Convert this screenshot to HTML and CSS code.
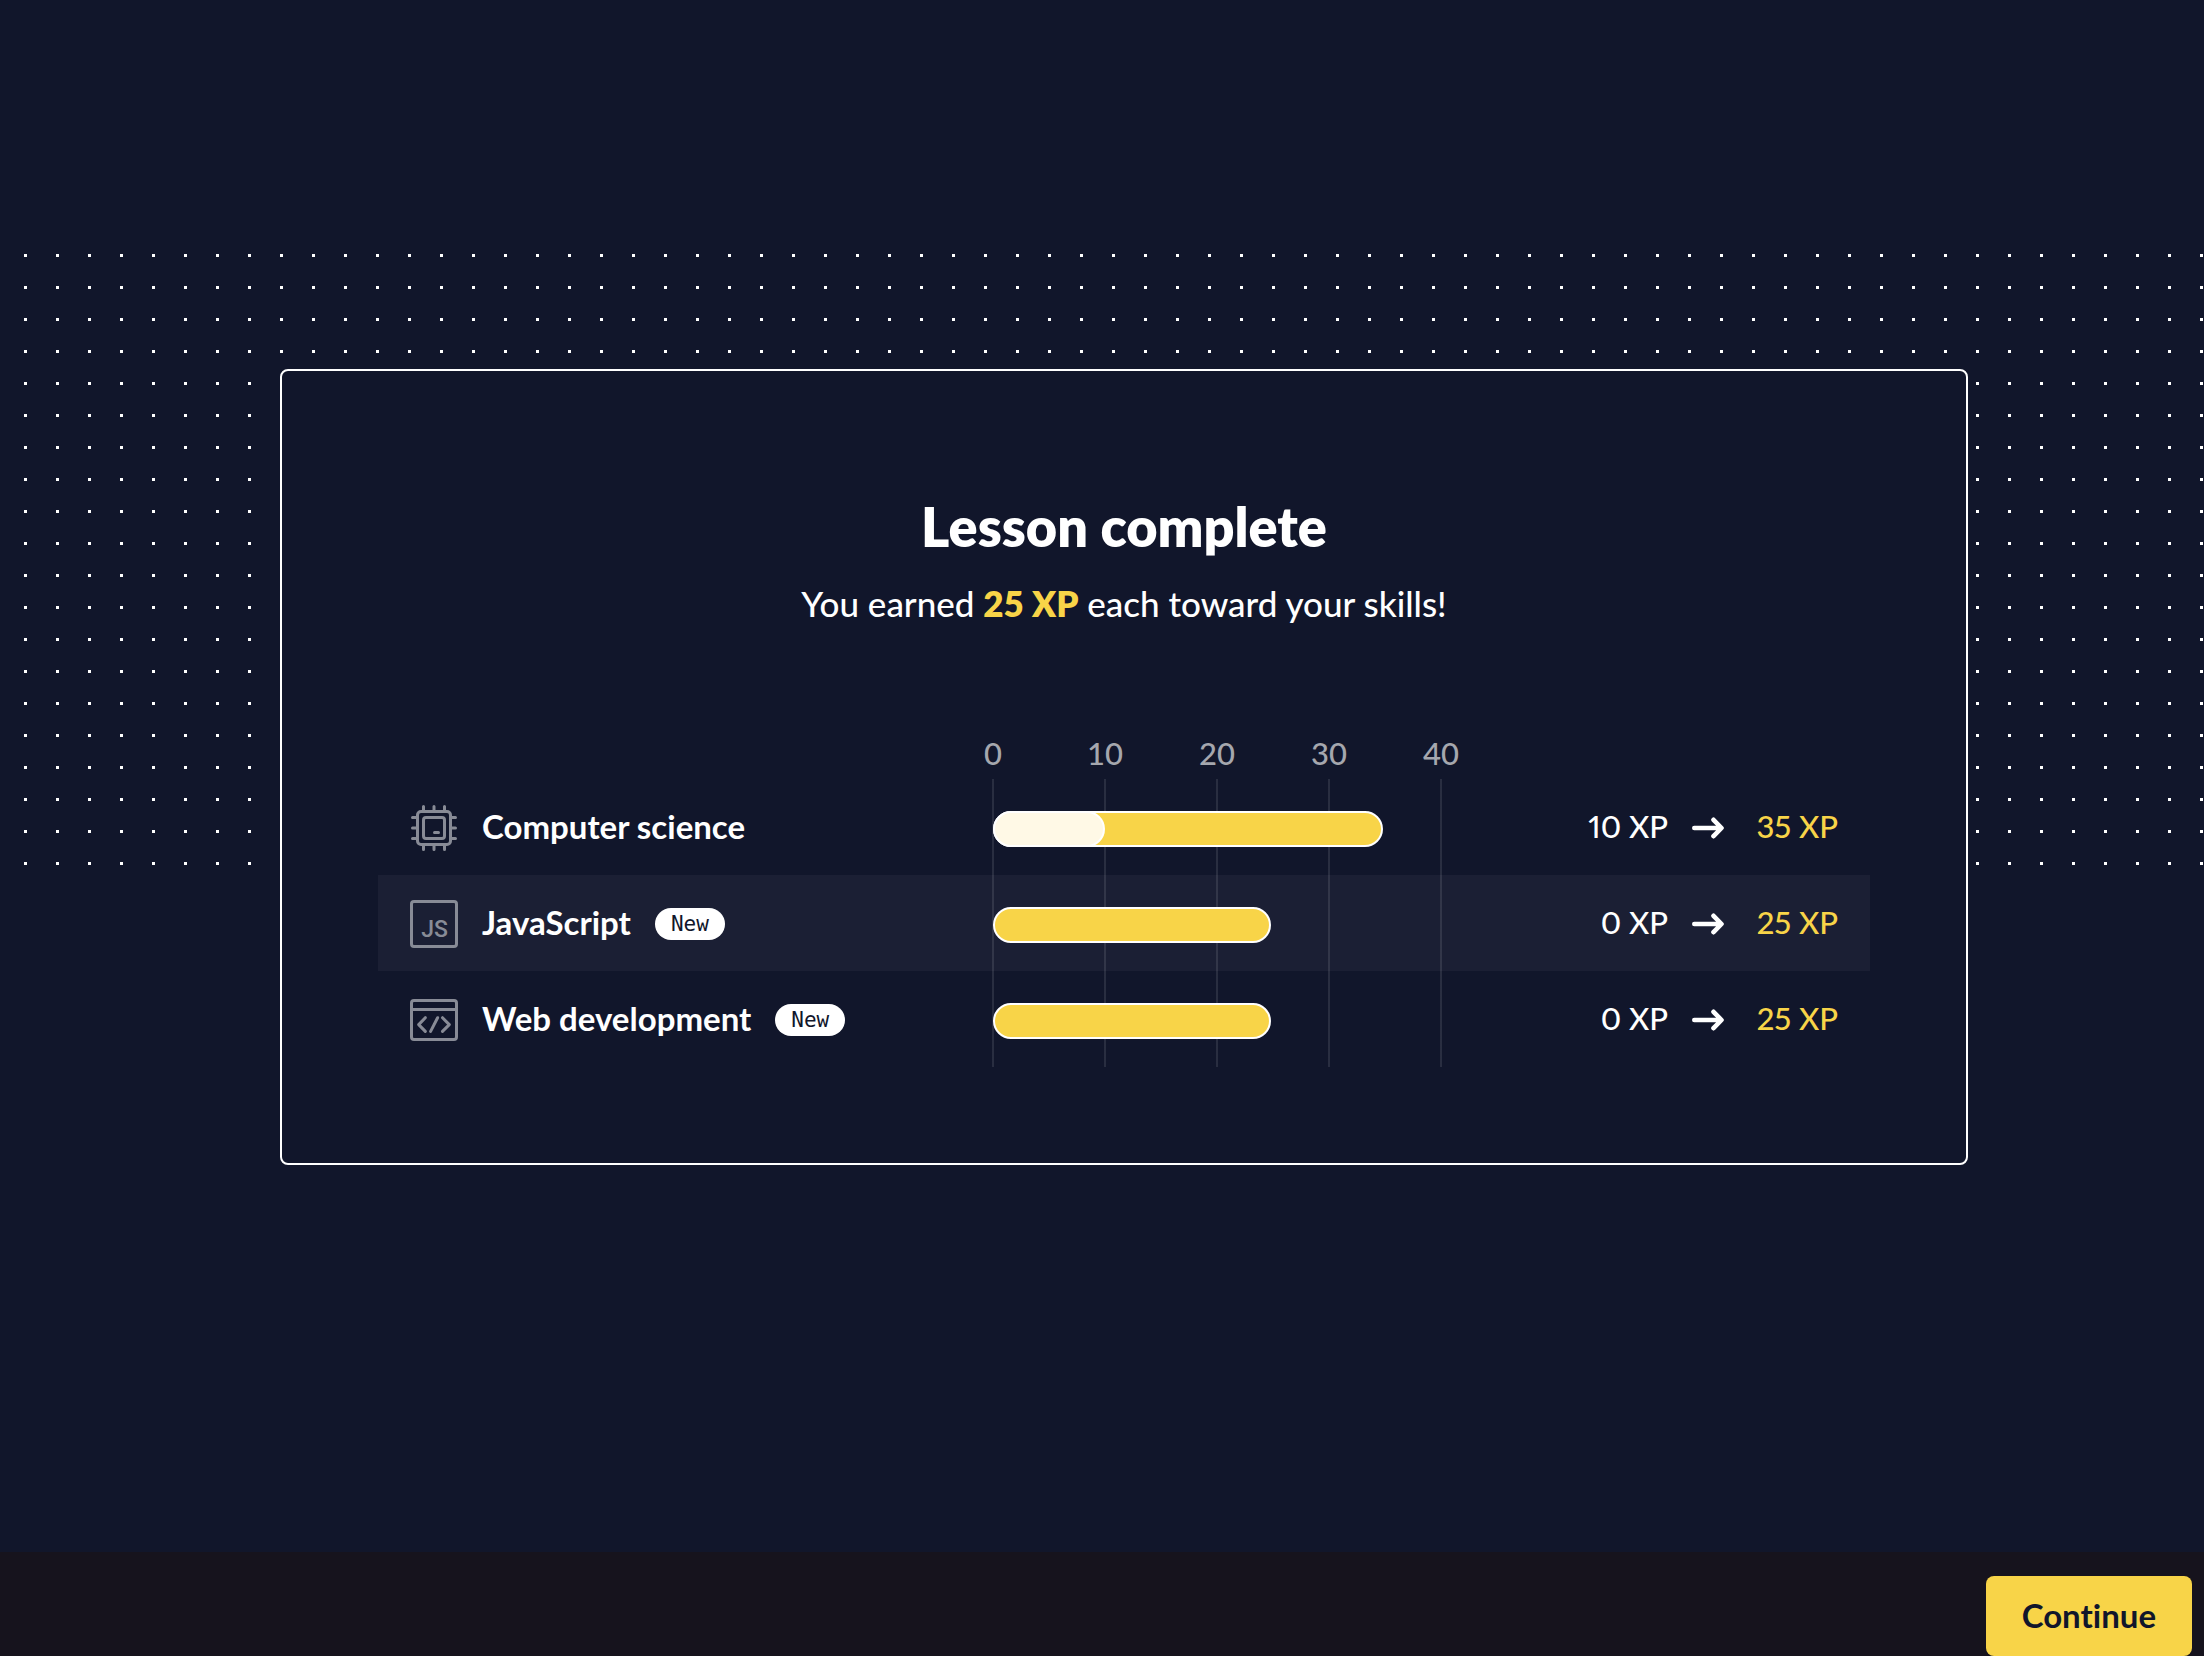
FILE: index.html
```html
<!DOCTYPE html>
<html lang="en">
<head>
<meta charset="utf-8">
<meta name="viewport" content="width=device-width, initial-scale=1">
<title>Lesson complete</title>
<link rel="stylesheet" href="styles.css">
</head>
<body>
<main class="stage">
  <section class="card" aria-labelledby="title">
    <h1 class="title" id="title">Lesson complete</h1>
    <p class="summary">You earned <strong class="earned">25 XP</strong> each toward your skills!</p>
    <table class="skills">
      <colgroup><col class="col-skill"><col class="col-chart"><col class="col-xp"></colgroup>
      <thead>
        <tr>
          <td></td>
          <th scope="col"><div class="axis"><span>0</span><span>10</span><span>20</span><span>30</span><span>40</span></div></th>
          <td></td>
        </tr>
      </thead>
      <tbody>
        <tr>
          <th scope="row"><div class="skill">
            <svg class="icon" viewBox="0 0 48 48" aria-hidden="true"><rect x="7.5" y="7.5" width="33" height="33" rx="3.5"/><rect x="13.5" y="13.5" width="21" height="21" rx="2.5"/><path d="M24.5 28.5h4M13.5 2.5v5M24 2.5v5M34.5 2.5v5M13.5 40.5v5M24 40.5v5M34.5 40.5v5M2.5 13.5h5M2.5 24h5M2.5 34.5h5M40.5 13.5h5M40.5 24h5M40.5 34.5h5"/></svg>
            <span class="name">Computer science</span>
          </div></th>
          <td class="chart"><div class="track"><div class="bar" style="--xp: 35"></div><div class="bar-before" style="--xp: 10"></div></div></td>
          <td><div class="xp"><span>10 XP</span><svg class="arrow" viewBox="0 0 32 32" aria-hidden="true"><path d="M2.3 16H28M21.5 7.8 29.5 16l-8 8.2"/></svg><span class="after">35 XP</span></div></td>
        </tr>
        <tr class="striped">
          <th scope="row"><div class="skill">
            <svg class="icon" viewBox="0 0 48 48" aria-hidden="true"><rect x="1.5" y="1.5" width="45" height="45" rx="2.5"/><text class="icon-text" x="24.5" y="37" text-anchor="middle">JS</text></svg>
            <span class="name">JavaScript</span><span class="tag">New</span>
          </div></th>
          <td class="chart"><div class="track"><div class="bar" style="--xp: 25"></div></div></td>
          <td><div class="xp"><span>0 XP</span><svg class="arrow" viewBox="0 0 32 32" aria-hidden="true"><path d="M2.3 16H28M21.5 7.8 29.5 16l-8 8.2"/></svg><span class="after">25 XP</span></div></td>
        </tr>
        <tr>
          <th scope="row"><div class="skill">
            <svg class="icon" viewBox="0 0 48 48" aria-hidden="true"><rect x="1.5" y="4.5" width="45" height="39" rx="2.5"/><path d="M1.5 13.5h45M15.3 21.7 8.7 28.6l6.6 6.8M27.6 21.7l-7 13.7M32.5 21.7l6.8 6.9-6.8 6.8"/></svg>
            <span class="name">Web development</span><span class="tag">New</span>
          </div></th>
          <td class="chart"><div class="track"><div class="bar" style="--xp: 25"></div></div></td>
          <td><div class="xp"><span>0 XP</span><svg class="arrow" viewBox="0 0 32 32" aria-hidden="true"><path d="M2.3 16H28M21.5 7.8 29.5 16l-8 8.2"/></svg><span class="after">25 XP</span></div></td>
        </tr>
      </tbody>
    </table>
  </section>
</main>
<footer class="footer"><button class="continue" type="button">Continue</button></footer>
</body>
</html>
```

FILE: styles.css
```css
:root {
  --navy: #11162b;
  --yellow: #f8d448;
  --white: #fff;
}

* { box-sizing: border-box; }

body {
  margin: 0;
  min-height: 100vh;
  display: flex;
  flex-direction: column;
  background: var(--navy);
  color: var(--white);
  font-family: Lato, "Liberation Sans", sans-serif;
  font-size: 32px;
  line-height: 48px;
  font-variant-ligatures: none;
}

.stage {
  position: relative;
  flex: 1;
  margin: 254px 0 0 24px;
  padding: 115px 236px 32px 256px;
}

/* Dotted backdrop behind the card */
.stage::before {
  content: "";
  position: absolute;
  top: 0;
  left: 0;
  right: 0;
  height: 640px;
  background: conic-gradient(from 270deg at 3px 3px, var(--white) 90deg, transparent 0) 0 0 / 32px 32px;
}

.card {
  position: relative;
  padding: 120px 96px 96px;
  border: 2px solid var(--white);
  border-radius: 8px;
  background: var(--navy);
}

.title {
  margin: 0;
  font-size: 54px;
  line-height: 72px;
  font-weight: 800;
  text-align: center;
}

.summary {
  margin: 12px 0 0;
  font-size: 35px;
  line-height: 56px;
  font-weight: 500;
  text-align: center;
}

.earned { color: var(--yellow); font-weight: 800; }

.skills {
  width: 100%;
  margin-top: 98px;
  border-collapse: collapse;
  table-layout: fixed;
}

.skills th, .skills td { padding: 0; font-weight: 500; text-align: left; }
.col-skill { width: 41.16%; }
.col-chart { width: 450px; }

.axis {
  display: flex;
  justify-content: space-between;
  height: 50px;
  margin: 0 -19px;
  color: #a5a7ae;
  font-size: 31px;
}
.axis span { width: 40px; text-align: center; }

.skills tbody tr { height: 96px; }
.striped { background: #1b1f34; }

.skill {
  display: flex;
  align-items: center;
  gap: 24px;
  padding: 2px 0 0 32px;
}
.skills .name {
  padding-bottom: 4px;
  font-size: 33px;
  line-height: 44px;
  font-weight: 700;
  white-space: nowrap;
}

.icon {
  width: 48px;
  height: 48px;
  fill: none;
  stroke: #888b96;
  stroke-width: 3;
  stroke-linecap: round;
  stroke-linejoin: round;
}
.icon-text {
  fill: #888b96;
  stroke: none;
  font: 500 23px Roboto, sans-serif;
}

.tag {
  padding: 0 16px;
  border-radius: 16px;
  background: var(--white);
  color: var(--navy);
  font-family: "DejaVu Sans Mono", monospace;
  font-size: 21px;
  line-height: 32px;
}

/* Vertical grid lines, one every ten points */
.chart {
  background: repeating-linear-gradient(90deg, rgba(255, 255, 255, 0.1) 0 2px, transparent 2px 112px);
}
.track {
  display: grid;
  margin: 4px 1px 0;
}
.bar, .bar-before {
  grid-area: 1 / 1;
  height: 36px;
  border: 2px solid var(--white);
  border-radius: 18px;
}
.bar { width: calc(var(--xp) / 40 * 100% - 2px); background: var(--yellow); }
.bar-before { width: calc(var(--xp) / 40 * 100%); background: #fff9e6; }

.xp {
  display: flex;
  align-items: center;
  justify-content: flex-end;
  gap: 24px;
  padding: 2px 32px 0 0;
  font-size: 31px;
  line-height: 44px;
  font-variant-numeric: proportional-nums;
}
.xp span { padding-bottom: 4px; }
.after { min-width: 90px; color: var(--yellow); text-align: right; }
.arrow {
  width: 32px;
  height: 32px;
  fill: none;
  stroke: var(--white);
  stroke-width: 4.6;
  stroke-linecap: round;
  stroke-linejoin: round;
}

.footer {
  display: flex;
  justify-content: flex-end;
  padding: 24px 12px 0;
  background: #16131d;
}
.continue {
  height: 80px;
  padding: 0 36px 2px;
  border: 0;
  border-radius: 8px;
  background: var(--yellow);
  color: var(--navy);
  font: 700 33px/48px Lato, "Liberation Sans", sans-serif;
  font-variant-ligatures: none;
}
```
